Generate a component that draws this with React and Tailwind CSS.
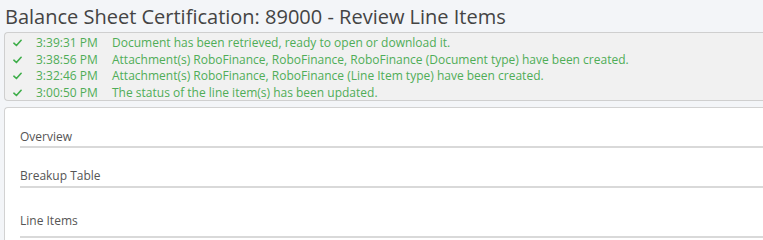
import React from 'react';

const messages = [
  { time: '3:39:31 PM', text: 'Document has been retrieved, ready to open or download it.' },
  { time: '3:38:56 PM', text: 'Attachment(s) RoboFinance, RoboFinance, RoboFinance (Document type) have been created.' },
  { time: '3:32:46 PM', text: 'Attachment(s) RoboFinance, RoboFinance (Line Item type) have been created.' },
  { time: '3:00:50 PM', text: 'The status of the line item(s) has been updated.' },
];

const sections = [
  { label: 'Overview', pad: 'pt-[22px] pb-[2px]' },
  { label: 'Breakup Table', pad: 'pt-[21px] pb-[3px]' },
  { label: 'Line Items', pad: 'pt-[26px] pb-[8px]' },
];

const Check = () => (
  <svg className="w-[9px] h-[8px]" viewBox="0 0 10 8" fill="none" stroke="#3fae4a" strokeWidth={1.8}>
    <path d="M1 4.2l2.8 2.6L9 1" strokeLinecap="round" strokeLinejoin="round" />
  </svg>
);

const App = () => {
  return (
    <div className="w-[763px] h-[240px] overflow-hidden bg-[#f3f5f8] font-['Open_Sans',sans-serif]">
      {/* Title */}
      <div className="h-[32px] pl-[5px] pt-[4px] text-[20px] leading-[25px] text-[#444]">
        Balance Sheet Certification: 89000 - Review Line Items
      </div>

      {/* Status messages */}
      <div className="ml-[4px] h-[69px] bg-[#f1f1f1] border border-r-0 border-[#cfcfcf] rounded-l-[4px] pt-[2px] text-[12px] leading-[16.5px] text-[#4fad57]">
        {messages.map((m) => (
          <div key={m.time} className="flex items-center">
            <div className="w-[31px] pl-[8px] flex items-center"><Check /></div>
            <div className="w-[76px]">{m.time}</div>
            <div>{m.text}</div>
          </div>
        ))}
      </div>

      {/* Sections card */}
      <div className="mt-[6px] ml-[4px] bg-white border-t border-l border-[#d2d2d2] rounded-tl-[4px] pl-[15px] h-[200px]">
        {sections.map((s) => (
          <div key={s.label} className={`${s.pad} border-b-2 border-[#d9d9d9] text-[12px] leading-[14px] text-[#555]`}>
            {s.label}
          </div>
        ))}
      </div>
    </div>
  );
};

export default App;
